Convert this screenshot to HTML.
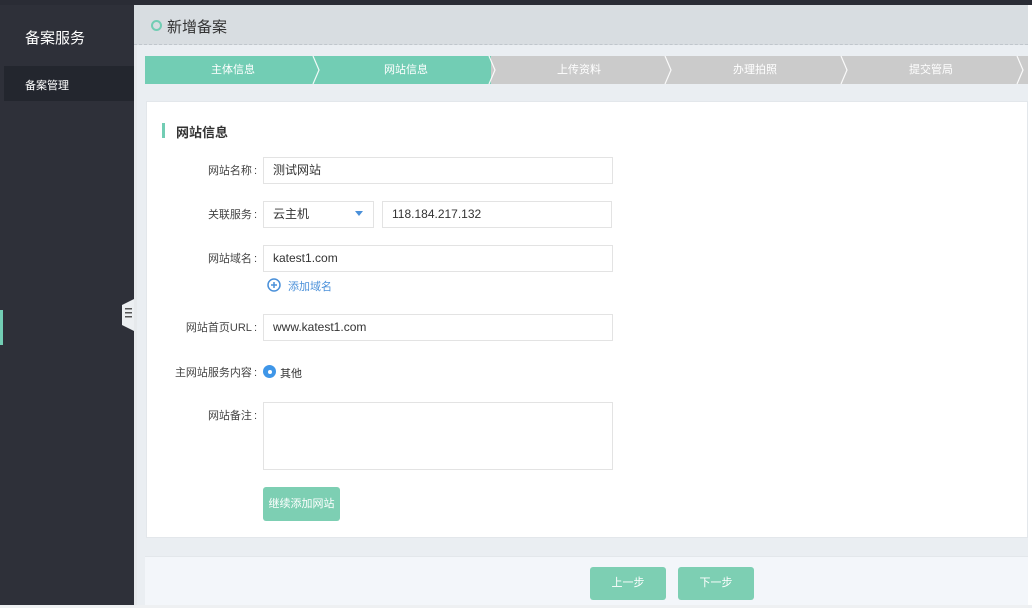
<!DOCTYPE html>
<html><head><meta charset="utf-8"><style>
*{margin:0;padding:0;box-sizing:border-box}
body{width:1032px;height:608px;overflow:hidden;background:#eaeef2;font-family:"Liberation Sans","Noto Sans CJK SC",sans-serif;position:relative;font-size:12px;color:#333}
.abs{position:absolute}
.side{left:0;top:0;width:134px;height:608px;background:#2e3039}
.top{left:0;top:0;width:1032px;height:5px;background:#2a2c35}
.hdr{left:134px;top:5px;width:894px;height:40px;background:#d8dde1;border-bottom:1px dashed #c0c6cc}
.step{top:56px;height:28px;color:#fff;font-size:11px;line-height:28px;text-align:center}
.lbl{text-align:right;width:126px;left:137px;font-size:11px;color:#444}
.lbl span{margin-left:2px;margin-right:6px}
.inp{height:27px;border:1px solid #e3e3e3;background:#fff;font-size:12px;line-height:25px;padding-left:9px;color:#333}
.btn{background:#7dcfb3;color:#fff;border-radius:3px;text-align:center;font-size:11px}
</style></head><body>
<div class="abs side"></div>
<div class="abs top"></div>
<div class="abs" style="left:25px;top:27px;color:#fff;font-size:15px">备案服务</div>
<div class="abs" style="left:4px;top:66px;width:130px;height:35px;background:#23262e"></div>
<div class="abs" style="left:25px;top:77px;color:#fff;font-size:11px">备案管理</div>
<div class="abs" style="left:0;top:310px;width:3px;height:35px;background:#72cdb4"></div>
<div class="abs" style="left:134px;top:5px;width:3px;height:603px;background:#e6e9ec"></div>
<svg class="abs" style="left:122px;top:295px" width="14" height="40"><path d="M12 0 L12 40 L12 36 L0 30 L0 10 L12 4Z" fill="#eceff2"/><rect x="3" y="13" width="7" height="1.5" fill="#555"/><rect x="3" y="17" width="7" height="1.5" fill="#555"/><rect x="3" y="21" width="7" height="1.5" fill="#555"/></svg>
<div class="abs hdr"></div>
<div class="abs" style="left:151px;top:20px;width:11px;height:11px;border:2.5px solid #72cdb4;border-radius:50%"></div>
<div class="abs" style="left:167px;top:16px;font-size:15px;color:#333">新增备案</div>
<div class="abs" style="left:1028px;top:5px;width:4px;height:603px;background:#fff"></div>
<div class="abs step" style="left:145px;width:176px;background:#72cdb4">主体信息</div>
<div class="abs step" style="left:321px;width:170px;background:#72cdb4">网站信息</div>
<div class="abs step" style="left:491px;width:537px;background:#cbcbcb"></div>
<div class="abs step" style="left:491px;width:176px">上传资料</div>
<div class="abs step" style="left:667px;width:176px">办理拍照</div>
<div class="abs step" style="left:843px;width:176px">提交管局</div>
<svg class="abs" style="left:145px;top:56px" width="883" height="28"><g fill="none" stroke="#fff" stroke-width="1.2" opacity=".9"><path d="M168 0 L174 14 L168 28"/><path d="M344 0 L350 14 L344 28"/><path d="M520 0 L526 14 L520 28"/><path d="M696 0 L702 14 L696 28"/><path d="M872 0 L878 14 L872 28"/></g></svg>
<div class="abs" style="left:146px;top:101px;width:882px;height:437px;background:#fff;border:1px solid #e3e7eb"></div>
<div class="abs" style="left:162px;top:123px;width:3px;height:15px;background:#72cdb4"></div>
<div class="abs" style="left:176px;top:122px;font-size:13px;font-weight:bold;color:#333">网站信息</div>
<div class="abs lbl" style="top:162px">网站名称<span>:</span></div>
<div class="abs inp" style="left:263px;top:157px;width:350px">测试网站</div>
<div class="abs lbl" style="top:206px">关联服务<span>:</span></div>
<div class="abs inp" style="left:263px;top:201px;width:111px">云主机</div>
<svg class="abs" style="left:355px;top:211px" width="8" height="6"><path d="M0 0 L8 0 L4 5Z" fill="#4a90d9"/></svg>
<div class="abs inp" style="left:382px;top:201px;width:230px">118.184.217.132</div>
<div class="abs lbl" style="top:250px">网站域名<span>:</span></div>
<div class="abs inp" style="left:263px;top:245px;width:350px">katest1.com</div>
<svg class="abs" style="left:267px;top:278px" width="14" height="14"><circle cx="7" cy="7" r="6" fill="none" stroke="#4a90d9" stroke-width="1.5"/><path d="M4 7H10M7 4V10" stroke="#4a90d9" stroke-width="1.5"/></svg>
<div class="abs" style="left:288px;top:278px;color:#4a90d9;font-size:11px">添加域名</div>
<div class="abs lbl" style="top:319px">网站首页URL<span>:</span></div>
<div class="abs inp" style="left:263px;top:314px;width:350px">www.katest1.com</div>
<div class="abs lbl" style="top:364px">主网站服务内容<span>:</span></div>
<div class="abs" style="left:263px;top:365px;width:13px;height:13px;border-radius:50%;background:#3f96e8"></div>
<div class="abs" style="left:267.5px;top:369.5px;width:4px;height:4px;border-radius:50%;background:#fff"></div>
<div class="abs" style="left:280px;top:365px;font-size:11px">其他</div>
<div class="abs lbl" style="top:407px">网站备注<span>:</span></div>
<div class="abs inp" style="left:263px;top:402px;width:350px;height:68px"></div>
<div class="abs btn" style="left:263px;top:487px;width:77px;height:34px;line-height:34px">继续添加网站</div>
<div class="abs" style="left:145px;top:556px;width:883px;height:52px;background:#f3f6fa;border-top:1px solid #e3e7eb"></div>
<div class="abs btn" style="left:590px;top:567px;width:76px;height:33px;line-height:33px">上一步</div>
<div class="abs btn" style="left:678px;top:567px;width:76px;height:33px;line-height:33px">下一步</div>
<div class="abs" style="left:0;top:605px;width:1032px;height:3px;background:#eef0f2"></div>
</body></html>
